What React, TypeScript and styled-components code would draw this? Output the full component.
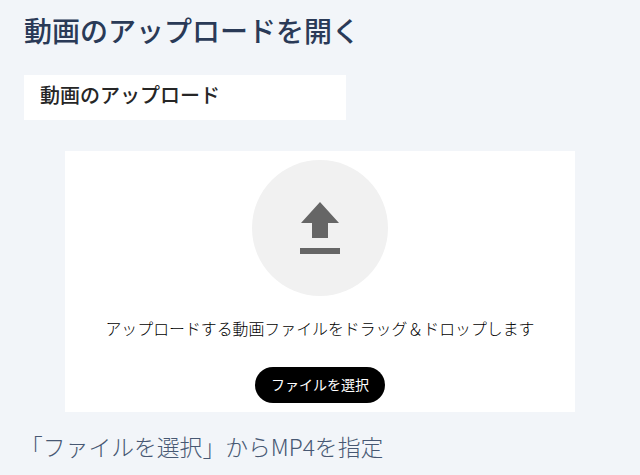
import React from "react";
import styled, { createGlobalStyle } from "styled-components";

const Global = createGlobalStyle`
  html, body { margin: 0; padding: 0; background: #f2f5f9; height: 475px; overflow: hidden; }
  * { box-sizing: border-box; }
  body { font-family: "Noto Sans CJK JP", "Noto Sans", sans-serif; }
`;

const Page = styled.div`
  display: flex;
  flex-direction: column;
  align-items: flex-start;
  padding: 10px 24px 0;
  width: 640px;
  height: 475px;
  overflow: hidden;
`;

const Heading = styled.h1`
  margin: 0;
  font-size: 28px;
  line-height: 40px;
  font-weight: 500;
  color: #2a3a57;
`;

const TabBar = styled.div`
  margin-top: 25px;
  width: 322px;
  height: 45px;
  background: #fff;
  padding: 0 0 5px 16px;
  display: flex;
  align-items: center;
`;

const TabLabel = styled.span`
  font-size: 20px;
  line-height: 40px;
  font-weight: 500;
  color: #262626;
`;

const DropZone = styled.div`
  margin: 31px 0 0 41px;
  width: 510px;
  height: 261px;
  background: #fff;
  display: flex;
  flex-direction: column;
  align-items: center;
  padding-top: 9px;
`;

const IconCircle = styled.div`
  width: 136px;
  height: 136px;
  border-radius: 50%;
  background: #f1f1f1;
  display: flex;
  align-items: center;
  justify-content: center;
`;

const DropText = styled.p`
  margin: 21px 0 0;
  font-size: 15.9px;
  line-height: 24px;
  font-weight: 300;
  color: #000;
  white-space: nowrap;
`;

const SelectButton = styled.button`
  margin-top: 26px;
  width: 130px;
  height: 36px;
  border: 0;
  border-radius: 18px;
  background: #000;
  color: #fff;
  font-family: inherit;
  font-size: 14px;
  line-height: 34px;
  font-weight: 400;
  padding: 0 0 2px;
`;

const Hint = styled.p`
  margin: 19px 0 0 -4px;
  font-size: 22.8px;
  line-height: 32px;
  font-weight: 300;
  color: #475873;
  white-space: nowrap;
`;

export default function App() {
  return (
    <>
      <Global />
      <Page>
        <Heading>動画のアップロードを開く</Heading>
        <TabBar>
          <TabLabel>動画のアップロード</TabLabel>
        </TabBar>
        <DropZone>
          <IconCircle>
            <svg width="40" height="52" viewBox="0 0 40 52" aria-hidden="true">
              <path d="M20 0 L39 21 H28 V36 H12 V21 H1 Z" fill="#666" />
              <rect x="0" y="46" width="40" height="6" fill="#666" />
            </svg>
          </IconCircle>
          <DropText>アップロードする動画ファイルをドラッグ＆ドロップします</DropText>
          <SelectButton>ファイルを選択</SelectButton>
        </DropZone>
        <Hint>「ファイルを選択」からMP4を指定</Hint>
      </Page>
    </>
  );
}
